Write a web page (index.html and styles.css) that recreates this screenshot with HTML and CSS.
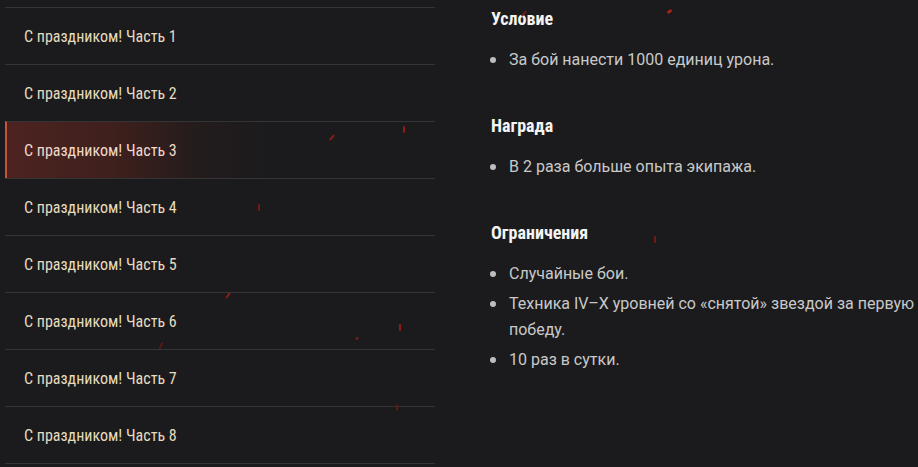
FILE: index.html
```
<!DOCTYPE html>
<html lang="ru">
<head>
<meta charset="utf-8">
<link rel="stylesheet" href="styles.css">
</head>
<body>
<div class="page">
  <ul class="missions">
    <li class="mission">С праздником! Часть 1</li>
    <li class="mission">С праздником! Часть 2</li>
    <li class="mission active">С праздником! Часть 3</li>
    <li class="mission">С праздником! Часть 4</li>
    <li class="mission">С праздником! Часть 5</li>
    <li class="mission">С праздником! Часть 6</li>
    <li class="mission">С праздником! Часть 7</li>
    <li class="mission">С праздником! Часть 8</li>
  </ul>
  <div class="details">
    <h3 class="title">Условие</h3>
    <ul class="bullets">
      <li>За бой нанести 1000 единиц урона.</li>
    </ul>
    <h3 class="title">Награда</h3>
    <ul class="bullets">
      <li>В 2 раза больше опыта экипажа.</li>
    </ul>
    <h3 class="title">Ограничения</h3>
    <ul class="bullets">
      <li>Случайные бои.</li>
      <li>Техника IV–X уровней со «снятой» звездой за первую победу.</li>
      <li>10 раз в сутки.</li>
    </ul>
  </div>
  <span class="spark s1"></span>
  <span class="spark s2"></span>
  <span class="spark s3"></span>
  <span class="spark s4"></span>
  <span class="spark s5"></span>
  <span class="spark s6"></span>
  <span class="spark s7"></span>
  <span class="spark s8"></span>
  <span class="spark s9"></span>
  <span class="spark s10"></span>
  <span class="spark s11"></span>
</div>
</body>
</html>
```
FILE: styles.css
```
html, body {
  margin: 0;
  padding: 0;
  background: #1b1b1d;
  height: 100%;
  overflow: hidden;
}
.page {
  position: relative;
  display: flex;
  width: 918px;
  height: 467px;
  background: #1b1b1d;
}
.missions {
  list-style: none;
  margin: 7px 0 0 5px;
  padding: 0;
  width: 430px;
  flex: none;
}
.mission {
  height: 56px;
  border-top: 1px solid #343436;
  display: flex;
  align-items: center;
  padding-left: 19px;
  font-family: "Roboto Condensed", "Liberation Sans Narrow", "DejaVu Sans Condensed", sans-serif;
  font-size: 16px;
  color: #e6dbbf;
}
.mission:last-child {
  border-bottom: 1px solid #343436;
}
.mission.active {
  padding-left: 17px;
  border-left: 2px solid #c2553a;
  color: #f2d9cb;
  background: linear-gradient(90deg, #4d2320 0%, #3e201d 25%, rgba(40,28,28,0.6) 45%, rgba(27,27,29,0) 62%);
}
.details {
  margin-left: 56px;
  padding-top: 7px;
  flex: 1;
  font-family: Roboto, "Noto Sans", sans-serif;
}
.title {
  margin: 0 0 16px 0;
  font-family: "Roboto Condensed", "Liberation Sans Narrow", "DejaVu Sans Condensed", sans-serif;
  font-weight: bold;
  font-size: 18px;
  line-height: 24px;
  color: #f4f4f4;
}
.bullets {
  list-style: none;
  margin: 0 0 41px 0;
  padding: 0;
}
.bullets li {
  position: relative;
  padding-left: 18px;
  font-size: 16px;
  line-height: 26px;
  color: #c9c9c9;
  margin-bottom: 4px;
}
.bullets li:last-child {
  margin-bottom: 0;
}
.bullets li::before {
  content: "";
  position: absolute;
  left: -1px;
  top: 10px;
  width: 6px;
  height: 6px;
  border-radius: 50%;
  background: #bdbdbd;
}
.spark {
  position: absolute;
  width: 2px;
  height: 7px;
  border-radius: 1px;
  background: #8e1d17;
}
.s1 { left: 523px; top: 10px; transform: rotate(40deg); background: #6d1c18; }
.s2 { left: 668px; top: 9px; width: 3px; height: 5px; transform: rotate(55deg); background: #a8221a; }
.s3 { left: 331px; top: 134px; transform: rotate(40deg); }
.s4 { left: 403px; top: 126px; }
.s5 { left: 258px; top: 204px; background: #6e1d18; }
.s6 { left: 227px; top: 292px; transform: rotate(35deg); }
.s7 { left: 399px; top: 324px; }
.s8 { left: 356px; top: 337px; width: 2px; height: 3px; transform: rotate(50deg); }
.s9 { left: 160px; top: 342px; transform: rotate(30deg); background: #5a1a17; }
.s10 { left: 396px; top: 404px; background: #5a1a17; }
.s11 { left: 654px; top: 236px; background: #701c18; }
```
